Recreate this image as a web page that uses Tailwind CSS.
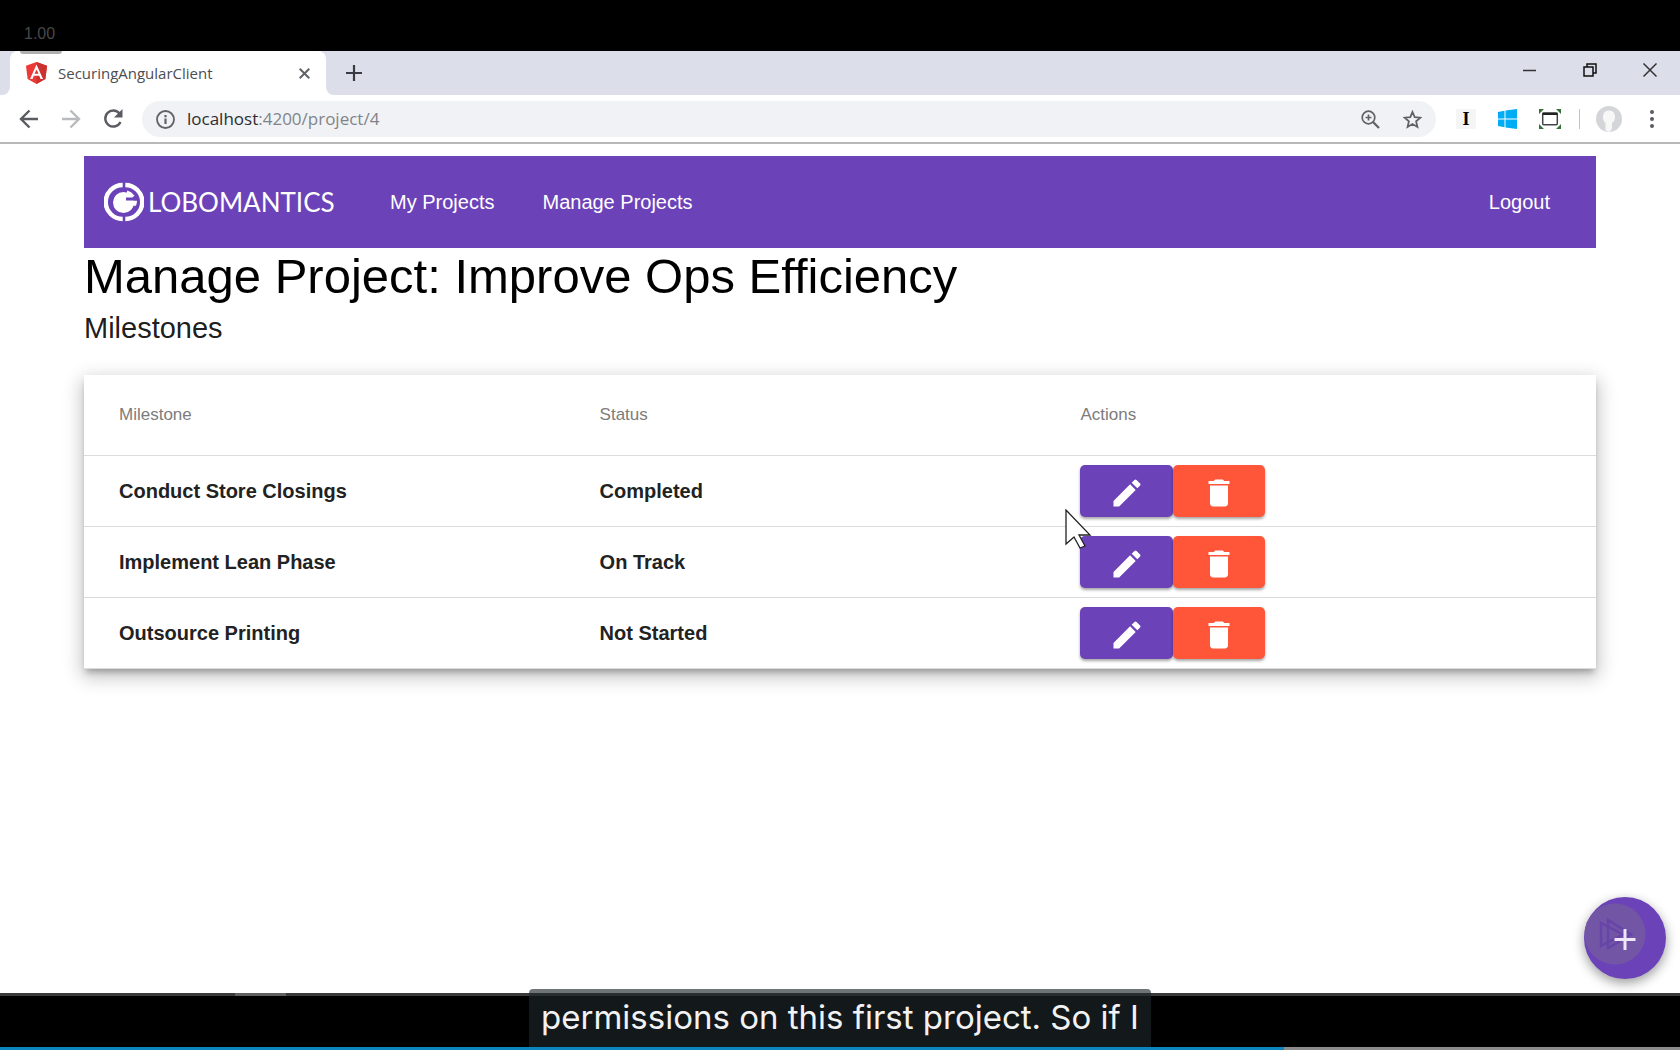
<!DOCTYPE html>
<html lang="en">
<head>
<meta charset="utf-8">
<title>SecuringAngularClient</title>
<script src="https://cdn.jsdelivr.net/npm/@tailwindcss/browser@4"></script>
</head>
<body class="relative flex h-screen flex-col overflow-hidden bg-black font-['Liberation_Sans',Arial,sans-serif]">

  <div class="flex h-[51px] shrink-0 items-center px-6 pt-4 font-['Liberation_Sans',sans-serif] text-base text-[#484848]">1.00</div>

  <!-- Browser chrome -->
  <header class="shrink-0 font-['Open_Sans',sans-serif]">
    <div class="relative flex h-11 items-stretch bg-[#dcdee9]">
      <div class="w-[10px] bg-white"><div class="h-full rounded-br-lg bg-[#dcdee9]"></div></div>
      <div class="relative flex w-[316px] items-center rounded-t-lg bg-white pl-4 pr-3">
        <div class="absolute left-[10px] top-0 h-[3px] w-[42px] rounded-b bg-[#b0b0b0]"></div>
        <svg class="h-[22px] w-[21px]" viewBox="0 0 21 22"><path fill="#ee3a37" d="M10.500 0 21 3.700 19.400 17 10.500 22 1.600 17 0 3.700z"/><path fill="#c93230" d="M10.500 0 21 3.700 19.400 17 10.500 22z"/><path fill="#fff" d="M10.500 2.600 4 17h2.500l1.300-3.200h5.400l1.300 3.200H17zm0 4.800 2 4.400h-4z"/></svg>
        <span class="ml-[11px] flex-1 text-[15px] text-[#4c4d52]">SecuringAngularClient</span>
        <button aria-label="Close tab" class="grid size-5 place-items-center"><svg class="size-[11px]" viewBox="0 0 11 11" stroke="#5f6368" stroke-width="2"><path d="m.7.700 9.600 9.600m0-9.600L.7 10.300"/></svg></button>
      </div>
      <div class="flex flex-1 items-center bg-white"><div class="flex h-full flex-1 items-center rounded-bl-lg bg-[#dcdee9] pl-5">
        <button aria-label="New tab"><svg class="size-4" viewBox="0 0 16 16" stroke="#3a3b42" stroke-width="2.200"><path d="M8 0v16M0 8h16"/></svg></button>
        <div class="ml-auto flex items-center gap-[46px] pb-[7px] pr-[23px]">
          <button aria-label="Minimize"><svg class="size-[14px]" viewBox="0 0 14 14" stroke="#333" stroke-width="1.500"><path d="M0 7.500h13"/></svg></button>
          <button aria-label="Restore"><svg class="size-[14px]" viewBox="0 0 14 14" fill="none" stroke="#111" stroke-width="1.500"><path d="M1 4h9v9H1zM4 4V1h9v9h-3"/></svg></button>
          <button aria-label="Close"><svg class="size-[14px]" viewBox="0 0 14 14" stroke="#333" stroke-width="1.500"><path d="m.5.500 13 13m0-13-13 13"/></svg></button>
        </div>
      </div></div>
    </div>
    <div class="flex h-[49px] items-center border-b-2 border-[#b8b8b8] bg-white pl-[19px] pr-[26px] pt-px">
      <button aria-label="Back"><svg class="h-5 w-[19px]" viewBox="0 0 19 20" fill="none" stroke="#5a5c62" stroke-width="2.400"><path d="M19 10H2m8.500-8.500L2 10l8.500 8.500"/></svg></button>
      <button aria-label="Forward" class="ml-6"><svg class="h-5 w-[19px]" viewBox="0 0 19 20" fill="none" stroke="#b9babd" stroke-width="2.400"><path d="M0 10h17M8.500 1.500 17 10l-8.500 8.500"/></svg></button>
      <button aria-label="Reload" class="ml-[22px]"><svg class="size-5" viewBox="0 0 20 20" fill="none" stroke="#5a5c62" stroke-width="2.400"><path d="M16.500 4.500A8 8 0 1 0 17.500 13"/><path fill="#5a5c62" stroke="none" d="M19.500 0v8.500H11z"/></svg></button>
      <div class="ml-[19px] flex h-9 flex-1 items-center rounded-full bg-[#f1f2f5] px-[14px]">
        <svg class="size-[19px]" viewBox="0 0 19 19" fill="none" stroke="#5f6368" stroke-width="1.800"><circle cx="9.500" cy="9.500" r="8.500"/><path stroke-width="2.200" d="M9.500 8.500v5.500M9.500 5v2.200"/></svg>
        <a href="#" class="ml-3 flex-1 text-[17px] text-[#80848a]"><span class="text-[#2c2d31]">localhost</span>:4200/project/4</a>
        <svg class="size-[19px]" viewBox="0 0 19 19" fill="none" stroke="#5f6368" stroke-width="1.700"><circle cx="7.500" cy="7.500" r="6.300"/><path d="M12 12l6 6" stroke-width="2.300"/><path d="M7.500 4.500v6M4.500 7.500h6"/></svg>
        <svg class="ml-[23px] size-[19px]" viewBox="0 0 19 19" fill="none" stroke="#5f6368" stroke-width="1.800"><path d="m9.500 2 2.200 5.200 5.700.5-4.300 3.700 1.300 5.500-4.900-2.900-4.900 2.900 1.300-5.500L1.600 7.700l5.700-.5z"/></svg>
      </div>
      <div class="ml-5 grid size-5 place-items-center bg-[#f5f5f5] font-['Liberation_Serif',serif] text-lg font-bold leading-5 text-black">I</div>
      <svg class="ml-[22px] size-[20px]" viewBox="0 0 20 20" fill="#00adf5"><path d="M0 3l6.500-1.300v7.800H0zM7.500 1.500 19 0v9.500H7.500zM0 10.500h6.500v7.800L0 17zM7.500 10.500H19V20L7.500 18.500z"/></svg>
      <svg class="ml-[21px] h-5 w-[22px]" viewBox="0 0 22 20"><rect x="3.700" y="4.200" width="14.600" height="11.500" rx="1" fill="none" stroke="#444" stroke-width="1.500"/><path fill="#222" d="M3.500 3.500h15v2.500h-15z"/><path fill="#37713b" d="M0 0h5L0 5zM22 0h-5l5 5zM0 20h5l-5-5zM22 20h-5l5-5z"/></svg>
      <div class="ml-[18px] h-5 w-px bg-[#c4c4c4]"></div>
      <svg class="ml-4 size-[26px]" viewBox="0 0 26 26"><circle cx="13" cy="13" r="13" fill="#d4d5d8"/><path fill="#f7f7f7" d="M13 4.500c4 0 6 2.800 6 6.500 0 3-1.500 5-3 6v4c0 2-1 4-3 5-1.500-.3-3-1-3.500-2V17C8 16 7 14 7 11c0-3.700 2-6.500 6-6.500z"/></svg>
      <button aria-label="Menu" class="ml-7"><svg class="h-[18px] w-1" viewBox="0 0 4 18" fill="#5a5c62"><circle cx="2" cy="2" r="2"/><circle cx="2" cy="9" r="2"/><circle cx="2" cy="16" r="2"/></svg></button>
    </div>
  </header>

  <!-- Application page -->
  <main class="relative flex-1 border-b-[3px] border-[#3a3a3a] bg-white px-[5%] pt-3">
    <nav class="flex h-[92px] items-center bg-[#6c42b9] pl-5 pr-[46px] text-xl text-white">
      <a href="#" class="flex w-[286px] items-center" aria-label="Globomantics">
        <svg class="size-10" viewBox="0 0 40 40"><g fill="none" stroke="#fff" stroke-width="4.500"><path d="M18.700 3A17 17 0 0 0 18.700 37M21.300 3A17 17 0 0 1 21.300 37"/></g><circle cx="19.500" cy="20.500" r="10.500" fill="#fff"/><path fill="#6c42b9" d="M22 15.500h10v3.200H22z"/><path fill="none" stroke="#fff" stroke-width="2.500" d="M29.500 14.500A12 12 0 0 0 23 9.800"/><path fill="#fff" d="M21 18.700h12a13 13 0 0 1-1 5H21z"/></svg>
        <span class="ml-1 font-[Lato,sans-serif] text-[26px]">LOBOMANTICS</span>
      </a>
      <a href="#">My Projects</a>
      <a href="#" class="ml-12">Manage Projects</a>
      <a href="#" class="ml-auto">Logout</a>
    </nav>
    <h1 class="text-[49px] leading-[56px] text-black">Manage Project: Improve Ops Efficiency</h1>
    <h2 class="pt-1 text-[29px] leading-10 text-black/90">Milestones</h2>

    <div class="mt-[27px] bg-white shadow-[0_5px_6px_-2px_rgba(0,0,0,0.25),0_6px_18px_2px_rgba(0,0,0,0.24)]">
      <table class="w-full table-fixed border-collapse text-left">
        <thead>
          <tr class="h-20 border-b border-[#dcdcdc] text-[17px] text-[#7c7c7c]">
            <th class="w-[34.1%] pl-[35px] font-normal">Milestone</th>
            <th class="w-[31.8%] font-normal">Status</th>
            <th class="font-normal">Actions</th>
          </tr>
        </thead>
        <tbody id="rows" class="text-xl font-bold text-[#222]"></tbody>
      </table>
    </div>

    <button aria-label="Add milestone" class="absolute bottom-[14px] right-[14px] grid size-[82px] place-items-center rounded-full bg-[#6c42b9] shadow-[0_4px_12px_rgba(0,0,0,0.4)]">
      <svg class="size-[82px]" viewBox="0 0 82 82"><circle cx="31" cy="37" r="30.500" fill="#7355a6"/><path fill="none" stroke="#6644a8" stroke-width="2.500" d="M17 26v23l22-11.500zM24 23v28l23-13.500z"/><path stroke="#efe6f8" stroke-width="3" d="M41 32v21M30.500 42.500h21"/></svg>
    </button>

    <svg class="absolute left-[63.400%] top-[365px] h-[41px] w-[27px]" viewBox="0 0 27 41"><path fill="#fff" stroke="#222" stroke-width="1.300" d="M1 1v34l8-7 6 11 5-2-6-11h11z"/></svg>
    <div class="absolute -bottom-[3px] left-[14%] h-[3px] w-[51px] bg-[#606060]"></div>
  </main>

  <!-- Player caption and progress -->
  <footer class="relative flex h-[54px] shrink-0 flex-col justify-end bg-black">
    <p class="absolute bottom-[3px] left-1/2 flex h-[58px] -translate-x-1/2 items-center whitespace-nowrap rounded-t bg-[#1e252b]/64 px-3 font-[Inter,sans-serif] text-[33px] text-[#f2f2f2]">permissions on this first project. So if I</p>
    <div class="flex h-[3px] bg-[#8c8c8c]"><div class="w-[76.400%] bg-[#0c86bf]"></div></div>
  </footer>

  <script>
    const pencil = '<svg class="mt-1 size-[36px]" viewBox="0 0 24 24" fill="#fff"><path d="M3 17.250V21h3.750L17.810 9.940l-3.750-3.750L3 17.250zM20.710 7.040a1 1 0 0 0 0-1.410l-2.340-2.340a1 1 0 0 0-1.410 0l-1.830 1.830 3.750 3.750 1.830-1.830z"/></svg>';
    const bin = '<svg class="mt-1 size-[36px]" viewBox="0 0 24 24" fill="#fff"><path d="M6 19c0 1.100.9 2 2 2h8c1.100 0 2-.9 2-2V7H6v12zM19 4h-3.500l-1-1h-5l-1 1H5v2h14V4z"/></svg>';
    const rows = [['Conduct Store Closings', 'Completed'], ['Implement Lean Phase', 'On Track'], ['Outsource Printing', 'Not Started']];
    document.getElementById('rows').innerHTML = rows.map(([name, status]) => `
      <tr class="h-[71px] border-b border-[#dcdcdc]">
        <td class="pl-[35px]">${name}</td>
        <td>${status}</td>
        <td><div class="flex">
          <button aria-label="Edit ${name}" class="grid h-[52px] w-[93px] place-items-center rounded-[5px] bg-[#6c42b9] shadow-[0_2px_3px_rgba(0,0,0,0.35)]">${pencil}</button>
          <button aria-label="Delete ${name}" class="grid h-[52px] w-[92px] place-items-center rounded-[5px] bg-[#ff563a] shadow-[0_2px_3px_rgba(0,0,0,0.35)]">${bin}</button>
        </div></td>
      </tr>`).join('');
  </script>
</body>
</html>
